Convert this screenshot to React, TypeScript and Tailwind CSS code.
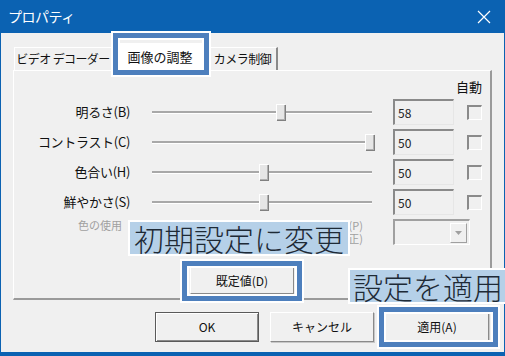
import React from "react";

const FONT = { fontFamily: '"Noto Sans CJK JP", "Noto Sans", sans-serif' };

type Row = { label: string; value: string; thumb: number };

const rows: Row[] = [
  { label: "明るさ(B)", value: "58", thumb: 124 },
  { label: "コントラスト(C)", value: "50", thumb: 213 },
  { label: "色合い(H)", value: "50", thumb: 107 },
  { label: "鮮やかさ(S)", value: "50", thumb: 107 },
];

function Slider({ thumb }: { thumb: number }) {
  return (
    <div className="relative ml-[22px] w-[222px] h-[18px] flex items-center">
      <div className="w-[220px] h-[3px] bg-[#a8a8a8] border-b border-white" />
      <div
        className="absolute top-[1px] w-[9px] h-[16px] bg-[#e6e6e6] border-t border-l border-white shadow-[1px_1px_0_#808080,inset_-1px_-1px_0_#b0b0b0]"
        style={{ left: thumb }}
      />
    </div>
  );
}

function EditBox({ value }: { value: string }) {
  return (
    <div className="ml-[19px] w-[61px] h-[26px] bg-[#f0f0f0] border-t-2 border-l-2 border-t-[#8a8a8a] border-l-[#8a8a8a] border-r border-b border-r-[#e6e6e6] border-b-[#e6e6e6] flex items-center pl-[3px] text-[12px] text-[#222]">
      {value}
    </div>
  );
}

function Check() {
  return (
    <div className="ml-[13px] w-[15px] h-[15px] border-t-2 border-l-2 border-t-[#8a8a8a] border-l-[#8a8a8a] border-r border-b border-r-white border-b-white bg-[#f0f0f0]" />
  );
}

function Button({ children, strong }: { children: React.ReactNode; strong?: boolean }) {
  return (
    <div
      className={`w-[104px] h-[30px] flex items-center justify-center text-[12px] text-[#111] bg-[#f0f0f0] ${
        strong
          ? "border border-[#5a5a5a] shadow-[inset_1px_1px_0_white,inset_-1px_-1px_0_#8a8a8a]"
          : "border-t border-l border-white border-r border-b border-r-[#8a8a8a] border-b-[#8a8a8a] shadow-[1px_1px_0_#c8c8c8]"
      }`}
    >
      {children}
    </div>
  );
}

export default function App() {
  return (
    <div className="w-[505px] h-[356px] bg-[#0b62b2] flex flex-col overflow-hidden" style={FONT}>
      <div className="h-[33px] flex items-center justify-between pl-[8px] pr-[14px] text-white">
        <span className="text-[14px] tracking-[-0.5px]">プロパティ</span>
        <svg width="14" height="14" viewBox="0 0 14 14">
          <path d="M1 1L13 13M13 1L1 13" stroke="white" strokeWidth="1.2" />
        </svg>
      </div>

      <div className="relative mx-[1px] mb-[4px] flex-1 bg-[#f0f0f0] pt-[10px] px-[12px]">
        {/* tabs */}
        <div className="flex items-end h-[27px] text-[12px] text-[#111] whitespace-nowrap">
          <div className="ml-[1px] w-[97px] h-[23px] flex items-center justify-center border-t border-l border-white bg-[#f0f0f0] tracking-[-0.6px]">
            ビデオ デコーダー
          </div>
          <div className="relative w-[98px] h-[27px] flex items-center justify-center bg-white text-[13px]">
            画像の調整
            <div className="absolute -top-[10px] -bottom-[5px] left-[2px] right-0 border-[5px] border-[#4d7fbd] shadow-[0_0_0_2px_white,inset_0_0_0_2px_white]" />
          </div>
          <div className="w-[69px] h-[23px] flex items-center justify-center border-t border-white border-r-2 border-r-[#8a8a8a] tracking-[-0.5px]">
            カメラ制御
          </div>
        </div>

        {/* panel */}
        <div className="h-[230px] border-t border-l border-white border-r-2 border-b-2 border-r-[#9a9a9a] border-b-[#9a9a9a] flex flex-col text-[12px] text-[#111]">
          <div className="mt-[8px] h-[16px] flex justify-end pr-[8px] leading-[16px] text-[13px]">自動</div>
          <div className="mt-[2px] flex flex-col">
            {rows.map((r) => (
              <div key={r.label} className="h-[30px] flex items-center">
                <div className="w-[116px] text-right text-[13px] tracking-[-0.3px] whitespace-nowrap">{r.label}</div>
                <Slider thumb={r.thumb} />
                <EditBox value={r.value} />
                <Check />
              </div>
            ))}
            <div className="relative h-[30px] flex items-center">
              <div className="ml-[64px] w-[285px] flex flex-col items-end text-[11px] leading-[13px] text-[#a0a0a0] whitespace-nowrap">
                <div className="w-full flex justify-between">
                  <span>色の使用</span>
                  <span>電源周波数設定(P)</span>
                </div>
                <span>(逆光補正)</span>
              </div>
              <div className="ml-[30px] w-[77px] h-[26px] border-t-2 border-l-2 border-t-[#a0a0a0] border-l-[#a0a0a0] border-r border-b border-r-white border-b-white flex justify-end items-center pr-[2px]">
                <div className="w-[17px] h-[20px] border-t border-l border-white border-r border-b border-r-[#a0a0a0] border-b-[#a0a0a0] flex items-center justify-center">
                  <svg width="7" height="4" viewBox="0 0 7 4">
                    <path d="M0 0H7L3.5 4Z" fill="#a0a0a0" />
                  </svg>
                </div>
              </div>
              <div className="absolute left-[116px] top-[5px] h-[32px] px-[4px] bg-[#b5d0e8] text-[30px] leading-[32px] font-light text-[#1e2a36] shadow-[0_0_0_2px_white] whitespace-nowrap">
                初期設定に変更
              </div>
            </div>
          </div>

          <div className="mt-[20px] ml-[176px] relative w-[104px] h-[27px] flex items-center justify-center bg-[#f0f0f0] border-t border-l border-white border-r border-b border-r-[#8a8a8a] border-b-[#8a8a8a]">
            既定値(D)
            <div className="absolute -left-[9px] -right-[9px] -top-[7px] -bottom-[8px] border-[5px] border-[#4d7fbd] shadow-[0_0_0_2px_white,inset_0_0_0_2px_white]" />
          </div>
        </div>

        {/* bottom buttons */}
        <div className="mt-[12px] flex justify-end gap-[11px] pr-[3px]">
          <Button strong>OK</Button>
          <Button>キャンセル</Button>
          <div className="relative">
            <Button>適用(A)</Button>
            <div className="absolute -left-[6px] -right-[9px] -top-[5px] -bottom-[5px] border-[5px] border-[#4d7fbd] shadow-[0_0_0_2px_white,inset_0_0_0_2px_white]" />
          </div>
        </div>

        <div className="absolute left-[349px] top-[237px] h-[32px] pl-[3px] pr-[6px] bg-[#b5d0e8] text-[30px] leading-[32px] font-light text-[#1e2a36] shadow-[0_0_0_2px_white] whitespace-nowrap">
          設定を適用
        </div>
      </div>
    </div>
  );
}
